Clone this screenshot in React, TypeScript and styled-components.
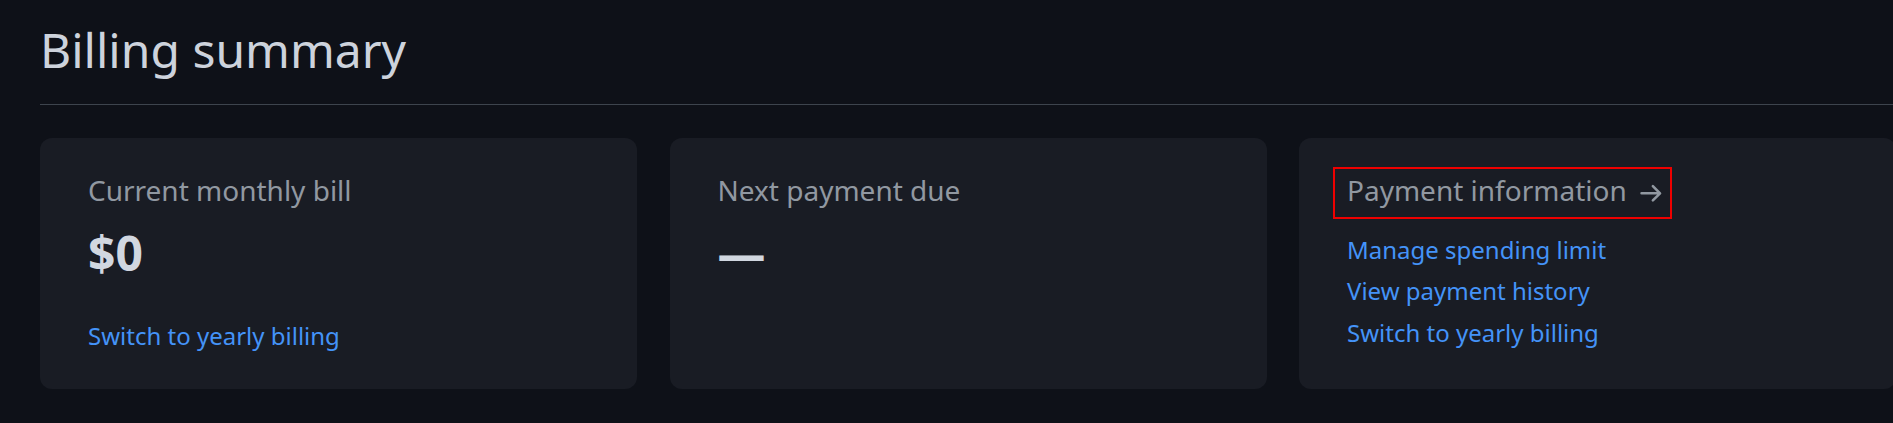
import React from "react";
import styled, { createGlobalStyle } from "styled-components";

const GlobalStyle = createGlobalStyle`
  html, body {
    margin: 0;
    padding: 0;
    background: #0e1118;
    overflow: hidden;
  }
  body {
    font-family: "Noto Sans", "Open Sans", sans-serif;
    color: #d1d7e0;
  }
`;

const Page = styled.main`
  padding: 14px 0 0 40px;
  width: 1856px;
`;

const Title = styled.h1`
  margin: 0;
  padding-bottom: 18px;
  border-bottom: 1px solid #3d444d;
  font-size: 48px;
  font-weight: 400;
  line-height: 72px;
  color: #cdd3dc;
`;

const Cards = styled.section`
  display: grid;
  grid-template-columns: repeat(3, 597px);
  column-gap: 32.5px;
  align-items: stretch;
  margin-top: 33px;
`;

const Card = styled.div`
  display: flex;
  flex-direction: column;
  align-items: flex-start;
  background: #191c24;
  border-radius: 12px;
  padding: 32px 48px 35.4px;
`;

const Label = styled.h2`
  margin: 0;
  font-size: 28px;
  font-weight: 400;
  line-height: 40px;
  color: #9198a1;
`;

const HeadingLink = styled.a`
  position: relative;
  display: inline-flex;
  align-items: center;
  gap: 10px;
  text-decoration: none;
  font-size: 28px;
  line-height: 40px;
  color: #9198a1;

  &::after {
    content: "";
    position: absolute;
    left: -14px;
    top: -3px;
    right: -7px;
    bottom: -9px;
    border: 2.5px solid #ee0000;
    pointer-events: none;
  }
`;

const ArrowIcon = styled.svg`
  flex: none;
  width: 28px;
  height: 28px;
  margin-top: 6px;
  fill: none;
  stroke: #9198a1;
  stroke-width: 2.2;
  stroke-linecap: round;
  stroke-linejoin: round;
`;

const Value = styled.div`
  margin-top: 13px;
  font-size: 48px;
  font-weight: 700;
  line-height: 60px;
  color: #d1d7e0;
`;

const Link = styled.a<{ $offset?: number }>`
  display: block;
  margin-top: ${(p) => (p.$offset ?? 0)}px;
  font-size: 24px;
  line-height: 36px;
  color: #4493f8;
  text-decoration: none;
`;

const LinkList = styled.nav`
  display: flex;
  flex-direction: column;
  gap: 5.7px;
  margin-top: 21.7px;
`;

const ArrowRight = () => (
  <ArrowIcon viewBox="0 0 24 24" aria-hidden="true">
    <path d="M3.9 12.25H19.6M13.6 6.1l6.15 6.15-6.15 6.15" />
  </ArrowIcon>
);

export default function App() {
  return (
    <>
      <GlobalStyle />
      <Page>
        <Title>Billing summary</Title>
        <Cards>
          <Card>
            <Label>Current monthly bill</Label>
            <Value>$0</Value>
            <Link href="#" $offset={35}>
              Switch to yearly billing
            </Link>
          </Card>
          <Card>
            <Label>Next payment due</Label>
            <Value>—</Value>
          </Card>
          <Card>
            <HeadingLink href="#">
              Payment information
              <ArrowRight />
            </HeadingLink>
            <LinkList>
              <Link href="#">Manage spending limit</Link>
              <Link href="#">View payment history</Link>
              <Link href="#">Switch to yearly billing</Link>
            </LinkList>
          </Card>
        </Cards>
      </Page>
    </>
  );
}
